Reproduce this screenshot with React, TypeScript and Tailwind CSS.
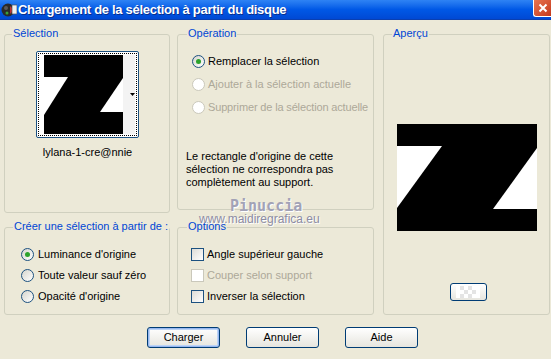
import React from "react";

const F = { fontFamily: '"Liberation Sans", Arial, sans-serif' };

function Radio({ checked, disabled }: { checked?: boolean; disabled?: boolean }) {
  return (
    <span
      className={`w-[13px] h-[13px] rounded-full border flex items-center justify-center shrink-0 ${
        disabled ? "border-[#CAC8BB] bg-white" : "border-[#1C5180] bg-linear-to-br from-[#D6D5CD] to-white"
      }`}
    >
      {checked && <span className="w-[5px] h-[5px] rounded-full bg-[#2BA22B]" />}
    </span>
  );
}

function Check({ disabled }: { disabled?: boolean }) {
  return (
    <span
      className={`w-[13px] h-[13px] border shrink-0 ${
        disabled ? "border-[#CAC8BB] bg-white" : "border-[#1C5180] bg-linear-to-br from-[#DCDCD7] to-white"
      }`}
    />
  );
}

function Group({
  label,
  className,
  labelLeft,
  children,
}: {
  label: string;
  className: string;
  labelLeft: string;
  children?: React.ReactNode;
}) {
  return (
    <div className={`relative border border-[#D0D0BF] rounded-[3px] ${className}`}>
      <span
        className={`absolute top-[-8px] ${labelLeft} px-[1px] bg-[#ECE9D8] text-[#0046D5] text-[11px] leading-[13px] whitespace-nowrap`}
      >
        {label}
      </span>
      {children}
    </div>
  );
}

function Btn({ label, def }: { label: string; def?: boolean }) {
  return (
    <div
      className={`w-[73px] h-[21px] rounded-[3px] border border-[#003C74] bg-linear-to-b from-white to-[#E6E5DE] flex items-center justify-center text-[11px] text-black ${
        def ? "shadow-[inset_0_0_0_1px_#97B7F0,inset_0_0_0_2px_#BCD4F6]" : ""
      }`}
    >
      {label}
    </div>
  );
}

export default function App() {
  return (
    <div className="w-[551px] h-[359px] bg-[#ECE9D8] overflow-hidden relative" style={F}>
      {/* Title bar */}
      <div className="h-[20px] flex items-start bg-linear-to-b from-[#2E83F4] via-[#0058E6] to-[#0049D4] border-b border-[#0A3FB0]">
        <svg width="16" height="16" viewBox="0 0 16 16" className="mt-[2px] ml-[1px]">
          <circle cx="7" cy="8" r="6.5" fill="#2a2a2a" />
          <circle cx="5" cy="6" r="2" fill="#5a5a5a" />
          <path d="M9 4 L13 8 L9 12 Z" fill="#c03030" />
          <circle cx="6" cy="11" r="1.5" fill="#3aa03a" />
          <rect x="11" y="3" width="5" height="9" fill="#f0f0f0" stroke="#555" strokeWidth="0.7" />
        </svg>
        <span className="ml-[1px] text-white font-bold text-[13px] leading-[20px] tracking-[-0.3px] whitespace-nowrap [text-shadow:1px_1px_0_#0A2E8C]">
          Chargement de la sélection à partir du disque
        </span>
        <div className="ml-auto w-[18px] h-[17px] bg-linear-to-br from-[#E8734F] to-[#C4371A] border-l border-b border-white rounded-bl-[3px] flex items-center justify-center">
          <svg width="10" height="10" viewBox="0 0 10 10">
            <path d="M1.5 1.5 L8.5 8.5 M8.5 1.5 L1.5 8.5" stroke="white" strokeWidth="2" />
          </svg>
        </div>
      </div>

      {/* Content */}
      <div className="flex pl-[4px] pt-[14px]">
        {/* Left column */}
        <div className="w-[166px] flex flex-col gap-[14px]">
          <Group label="Sélection" className="h-[179px]" labelLeft="left-[7px]">
            <div className="flex flex-col items-center pt-[16px] pl-[1px]">
              <div className="w-[103px] h-[87px] rounded-[2px] border border-[#1C5180] bg-white p-[1px]">
                <div className="w-full h-full border border-dotted border-black relative flex items-center pl-[5px]">
                  <svg width="91" height="79" viewBox="0 0 91 79" className="block">
                    <rect x="0" y="0" width="79" height="79" fill="#000" />
                    <rect x="79" y="0" width="12" height="79" fill="#F3F3F3" />
                    <polygon points="0,22 24,22 0,60" fill="#fff" />
                    <polygon points="79,23 56,57 79,57" fill="#fff" />
                  </svg>
                  <svg width="5" height="3" viewBox="0 0 5 3" className="absolute right-[1px] top-[39px]">
                    <polygon points="0,0 5,0 2.5,3" fill="#000" />
                  </svg>
                </div>
              </div>
              <div className="mt-[8px] text-[11px] leading-[13px] text-black">lylana-1-cre@nnie</div>
            </div>
          </Group>
          <Group label="Créer une sélection à partir de :" className="h-[88px]" labelLeft="left-[8px]">
            <div className="flex flex-col gap-[8px] pl-[16px] pt-[20px] text-[11px] leading-[13px] text-black whitespace-nowrap">
              <div className="flex items-center gap-[4px]">
                <Radio checked />
                <span>Luminance d'origine</span>
              </div>
              <div className="flex items-center gap-[4px]">
                <Radio />
                <span>Toute valeur sauf zéro</span>
              </div>
              <div className="flex items-center gap-[4px]">
                <Radio />
                <span>Opacité d'origine</span>
              </div>
            </div>
          </Group>
        </div>

        {/* Middle column */}
        <div className="w-[197px] ml-[7px] flex flex-col gap-[17px]">
          <Group label="Opération" className="h-[176px]" labelLeft="left-[9px]">
            <div className="flex flex-col gap-[10px] pl-[14px] pt-[20px] text-[11px] leading-[13px] whitespace-nowrap">
              <div className="flex items-center gap-[3px] text-black">
                <Radio checked />
                <span>Remplacer la sélection</span>
              </div>
              <div className="flex items-center gap-[3px] text-[#ACA899]">
                <Radio disabled />
                <span>Ajouter à la sélection actuelle</span>
              </div>
              <div className="flex items-center gap-[3px] text-[#ACA899]">
                <Radio disabled />
                <span className="tracking-[-0.15px]">Supprimer de la sélection actuelle</span>
              </div>
            </div>
            <p className="pl-[8px] pt-[36px] text-[11px] leading-[13px] text-black w-[190px]">
              Le rectangle d'origine de cette sélection ne correspondra pas complètement au support.
            </p>
          </Group>
          <Group label="Options" className="h-[88px]" labelLeft="left-[9px]">
            <div className="flex flex-col gap-[8px] pl-[13px] pt-[20px] text-[11px] leading-[13px] whitespace-nowrap">
              <div className="flex items-center gap-[3px] text-black">
                <Check />
                <span>Angle supérieur gauche</span>
              </div>
              <div className="flex items-center gap-[3px] text-[#ACA899]">
                <Check disabled />
                <span>Couper selon support</span>
              </div>
              <div className="flex items-center gap-[3px] text-black">
                <Check />
                <span>Inverser la sélection</span>
              </div>
            </div>
          </Group>
        </div>

        {/* Right column */}
        <div className="w-[167px] ml-[9px]">
          <Group label="Aperçu" className="h-[281px]" labelLeft="left-[8px]">
            <div className="flex flex-col items-center pt-[89px]">
              <svg width="140" height="107" viewBox="0 0 140 107" className="block">
                <rect x="0" y="0" width="140" height="107" fill="#000" />
                <polygon points="0,22 45,22 0,84" fill="#fff" />
                <polygon points="140,24 96,85 140,85" fill="#fff" />
              </svg>
              <div className="mt-[52px] ml-[3px] w-[37px] h-[18px] rounded-[3px] border border-[#003C74] bg-linear-to-b from-white to-[#E6E5DE] flex items-center justify-center">
                <svg width="24" height="12" viewBox="0 0 24 12">
                  <rect x="0" y="0" width="24" height="12" fill="#fff" />
                  <rect x="4" y="0" width="4" height="4" fill="#E4E4E4" />
                  <rect x="12" y="0" width="4" height="4" fill="#E4E4E4" />
                  <rect x="8" y="4" width="4" height="4" fill="#E4E4E4" />
                  <rect x="16" y="4" width="4" height="4" fill="#E4E4E4" />
                  <rect x="4" y="8" width="4" height="4" fill="#E4E4E4" />
                  <rect x="12" y="8" width="4" height="4" fill="#E4E4E4" />
                </svg>
              </div>
            </div>
          </Group>
        </div>
      </div>

      {/* Buttons */}
      <div className="flex gap-[26px] ml-[147px] mt-[12px]">
        <Btn label="Charger" def />
        <Btn label="Annuler" />
        <Btn label="Aide" />
      </div>

      {/* Watermark overlay */}
      <div
        className="absolute left-[230px] top-[195px] text-[15px] font-bold text-[#A2A2B6] [text-shadow:1px_1px_0_#ffffff] whitespace-nowrap"
        style={{ fontFamily: '"DejaVu Sans Mono", monospace' }}
      >
        Pinuccia
      </div>
      <div className="absolute left-[199px] top-[212px] text-[12px] leading-[14px] text-[#8C8CA4] [text-shadow:1px_1px_0_#ffffff] whitespace-nowrap">
        www.maidiregrafica.eu
      </div>
    </div>
  );
}
